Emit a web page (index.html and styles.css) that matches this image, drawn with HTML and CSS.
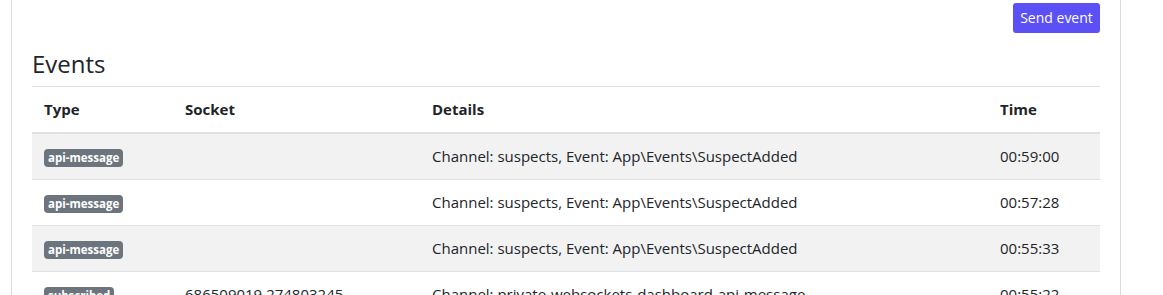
FILE: index.html
```html
<!DOCTYPE html>
<html>
<head>
<meta charset="utf-8">
<link rel="stylesheet" href="styles.css">
</head>
<body>
<div class="card">
  <div class="toolbar">
    <button class="btn-send">Send event</button>
  </div>
  <h2 class="title">Events</h2>
  <table class="events">
    <thead>
      <tr>
        <th class="c-type">Type</th>
        <th class="c-socket">Socket</th>
        <th class="c-details">Details</th>
        <th class="c-time">Time</th>
      </tr>
    </thead>
    <tbody>
      <tr class="odd">
        <td><span class="badge">api-message</span></td>
        <td></td>
        <td>Channel: suspects, Event: App\Events\SuspectAdded</td>
        <td>00:59:00</td>
      </tr>
      <tr>
        <td><span class="badge">api-message</span></td>
        <td></td>
        <td>Channel: suspects, Event: App\Events\SuspectAdded</td>
        <td>00:57:28</td>
      </tr>
      <tr class="odd">
        <td><span class="badge">api-message</span></td>
        <td></td>
        <td>Channel: suspects, Event: App\Events\SuspectAdded</td>
        <td>00:55:33</td>
      </tr>
      <tr>
        <td><span class="badge">subscribed</span></td>
        <td>686509019.274803245</td>
        <td>Channel: private-websockets-dashboard-api-message</td>
        <td>00:55:22</td>
      </tr>
    </tbody>
  </table>
</div>
</body>
</html>
```

FILE: styles.css
```css
html, body {
  margin: 0;
  padding: 0;
  background: #ffffff;
  overflow: hidden;
}
body {
  font-family: "Open Sans", "Noto Sans", sans-serif;
  color: #212529;
  font-size: 15px;
}
.card {
  margin: -20px 0 0 11px;
  width: 1068px;
  padding: 23px 20px 20px 20px;
  border-left: 1px solid #dcdcdc;
  border-right: 1px solid #dcdcdc;
}
.toolbar {
  display: flex;
  justify-content: flex-end;
}
.btn-send {
  font-family: inherit;
  font-size: 14px;
  color: #ffffff;
  background: #5b50f6;
  border: none;
  border-radius: 3px;
  height: 30px;
  width: 87px;
  padding: 0;
  line-height: 30px;
}
.title {
  margin: 17px 0 8px 0;
  font-size: 24px;
  font-weight: 500;
  line-height: 28px;
}
.events {
  width: 100%;
  border-collapse: collapse;
}
.events th {
  text-align: left;
  font-weight: 700;
  padding: 12px;
  line-height: 21px;
  border-top: 1px solid #dee2e6;
  border-bottom: 2px solid #dee2e6;
}
.events td {
  padding: 12px;
  line-height: 21px;
  border-bottom: 1px solid #dee2e6;
  vertical-align: middle;
}
.events tr.odd td {
  background: #f2f2f2;
}
.c-type { width: 117px; }
.c-socket { width: 223px; }
.c-details { width: 544px; }
.badge {
  display: inline-block;
  background: #6c757d;
  color: #fff;
  font-size: 11.5px;
  font-weight: 700;
  line-height: 18px;
  padding: 0 4px;
  border-radius: 4px;
  vertical-align: middle;
}
```
